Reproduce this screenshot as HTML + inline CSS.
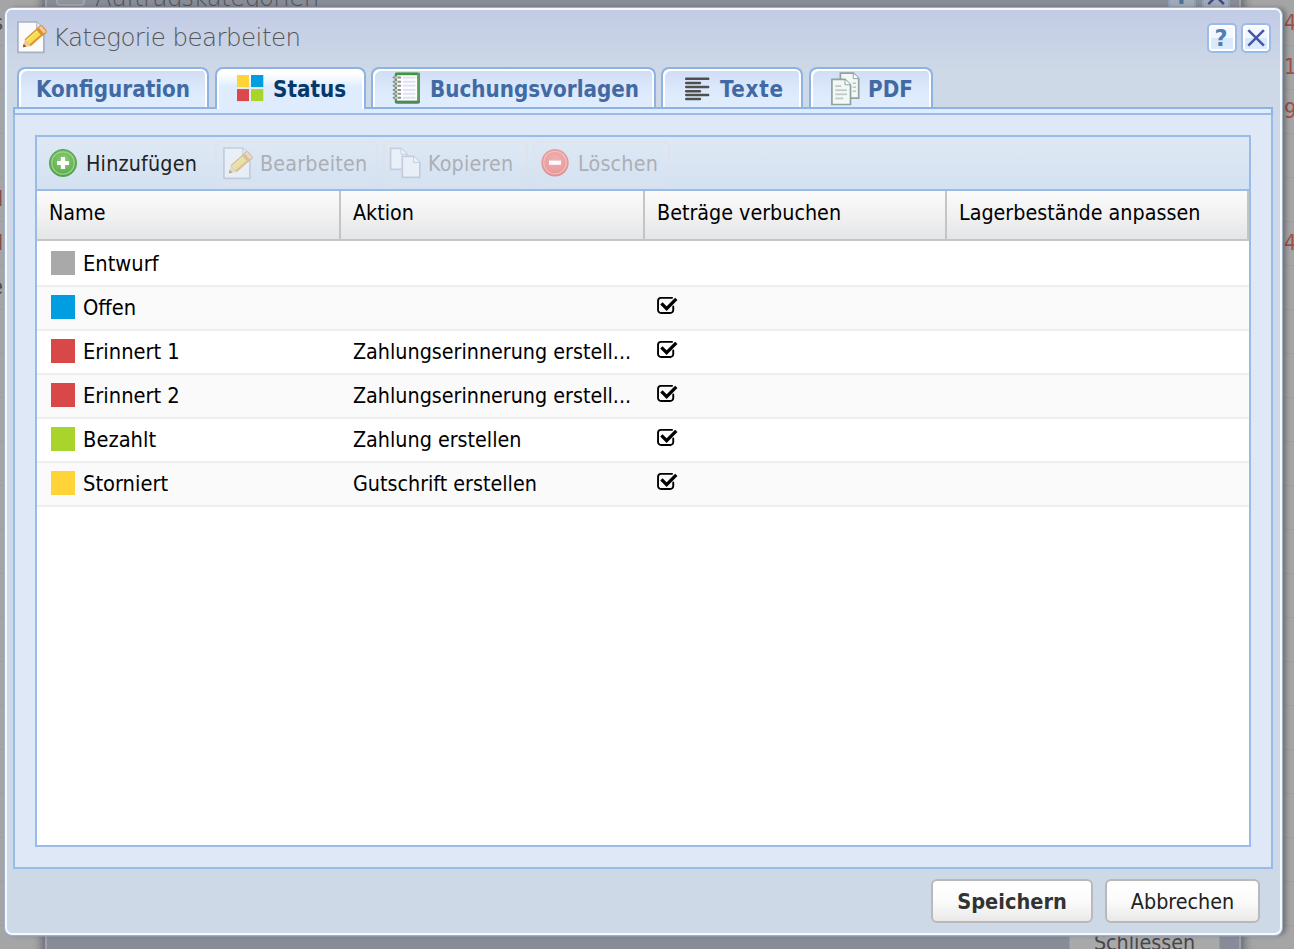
<!DOCTYPE html>
<html lang="de">
<head>
<meta charset="utf-8">
<title>Kategorie bearbeiten</title>
<style>
*{box-sizing:border-box;margin:0;padding:0}
html,body{width:1294px;height:949px;overflow:hidden}
body{position:relative;background:#a5a5a5 repeating-linear-gradient(to bottom,transparent 0,transparent 43px,rgba(0,0,0,.05) 43px,rgba(0,0,0,.05) 44px) 0 2px;font-family:"DejaVu Sans Condensed","Liberation Sans",sans-serif;font-size:21.3px;color:#000}
.abs{position:absolute}
/* ---------- masked background page ---------- */
.bgwin{position:absolute;left:43px;top:-40px;width:1200px;height:1000px;background:#888c96;border-left:2px solid #747c8b;border-right:2px solid #747c8b;box-shadow:inset 2px 0 0 #9ea3ab,inset -2px 0 0 #9ea3ab,0 0 9px 1px rgba(0,0,0,.38)}
.bgtitle{position:absolute;left:95px;top:-17px;font-family:"DejaVu Sans Light","DejaVu Sans","Liberation Sans",sans-serif;font-weight:200;font-size:24.5px;color:#4f525a;white-space:nowrap;letter-spacing:-.53px;line-height:30px}
.bgicon{position:absolute;left:56px;top:-14px;width:29px;height:20px;border:2px solid #9fa4ab;border-radius:4px;background:#8f939b}
.bgtool{position:absolute;top:-18px;width:28px;height:29px;border:2px solid #8c9fbe;background:#a0a9b8;border-radius:4px}
.bgbtn{position:absolute;left:1069px;top:925px;width:151px;height:40px;background:#a9a9a9;border:1px solid #9a9a9a;border-radius:4px 4px 0 0;font-size:21.3px;color:#46474b;text-align:center;line-height:22px;padding-top:6px}
.rednum{position:absolute;left:1284px;font-size:22px;color:#a0504a;line-height:22px}
.lfrag{position:absolute;right:1291px;font-size:21.5px;line-height:22px;color:#4a4a4a;white-space:nowrap}
/* ---------- window ---------- */
.win{position:absolute;left:4px;top:7px;width:1279px;height:929px;border:1px solid #9eafc8;border-radius:8px;background:#ced9e7;box-shadow:inset 0 0 0 2px #f6f9fe,-1px 1px 0 0 rgba(150,168,196,.55),4px 0 5px -1px rgba(0,0,0,.32)}
.winhead{position:absolute;left:2px;top:2px;right:2px;height:58px;border-radius:5px 5px 0 0;background:linear-gradient(#c2cbe5,#c7d1e6 45%,#cdd8e7)}
.title{position:absolute;left:53px;top:23px;font-family:"DejaVu Sans Light","DejaVu Sans","Liberation Sans",sans-serif;font-weight:200;font-size:24.5px;color:#555;white-space:nowrap;letter-spacing:-.53px;line-height:30px}
.tool{position:absolute;top:23px;width:30px;height:30px;border:2px solid #9dbbe8;border-radius:5px;background:linear-gradient(#f6faff 0,#f1f7ff 48%,#d9e9fc 50%,#dcebfc 100%);box-shadow:inset 0 0 0 2px #fff}
.tool .q{position:absolute;left:-1px;top:0;width:26px;text-align:center;font-family:"DejaVu Sans","Liberation Sans",sans-serif;font-weight:bold;font-size:22.5px;line-height:26px;color:#4d7fb0}
.bgtool .q{position:absolute;left:0;top:-1px;width:24px;text-align:center;font-family:"DejaVu Sans","Liberation Sans",sans-serif;font-weight:bold;font-size:22.5px;line-height:26px;color:#4c6f96}
/* tabs */
.tab{position:absolute;top:67px;height:42px;border:2px solid #8db2e3;border-bottom:0;border-radius:8px 8px 0 0;background:linear-gradient(#cfdcf5 0,#dbe7fa 45%,#deecfd 70%);box-shadow:inset 2px 2px 0 #fff,inset -2px 0 0 #fff;font-weight:bold;font-size:22.2px;color:#416aa3;white-space:nowrap}
.tab span{position:absolute;top:6px;line-height:28px}
.tab.active{height:42px;background:linear-gradient(#fff 0,#fff 12%,#deecfd 45%);color:#04396a;z-index:3}
.strip{position:absolute;left:13px;top:107px;width:1260px;height:8px;border:2px solid #8db2e3;border-bottom-color:#99bbe8;background:#deecfd;z-index:2}
.tabpanel{position:absolute;left:13px;top:113px;width:1260px;height:756px;border:2px solid #99bbe8;background:#dfe8f6}
/* grid */
.grid{position:absolute;left:35px;top:135px;width:1216px;height:712px;border:2px solid #99bbe8;background:#fff;overflow:hidden}
.tbar{position:absolute;left:0;top:0;width:100%;height:54px;border-bottom:2px solid #99bbe8;background:linear-gradient(#dfe9f5,#d3e1f1)}
.tbtn{position:absolute;top:4px;height:44px;border:2px solid transparent;border-radius:6px;white-space:nowrap;color:#222;line-height:26px}
.tbtn span{position:absolute;top:8px;letter-spacing:.2px}
.tbtn.dis{border-color:rgba(222,225,231,.8);color:#acafb6}
.hd{position:absolute;left:0;top:54px;width:100%;height:50px;border-bottom:2px solid #c5c5c5;background:linear-gradient(#fbfbfb,#f1f1f2 50%,#e4e5e7)}
.hc{position:absolute;top:0;height:48px;border-right:2px solid #c5c5c5;padding:9px 0 0 12px;line-height:26px;white-space:nowrap}
.row{position:absolute;left:0;width:100%;height:44px;border-bottom:2px solid #ededed;background:#fff}
.row.alt{background:#fafafa}
.row .sq{position:absolute;left:14px;top:8px;width:24px;height:24px}
.row .c{position:absolute;top:8px;line-height:26px;white-space:nowrap}
.row svg{position:absolute;left:619px;top:8px}
/* buttons */
.btn{position:absolute;top:879px;height:44px;border:2px solid #b9b9b9;border-radius:6px;background:linear-gradient(#fff,#fbfbfb 50%,#e9e9e9);text-align:center;line-height:26px;padding-top:8px;color:#222;white-space:nowrap}
</style>
</head>
<body>
<svg width="0" height="0" style="position:absolute">
<defs>
<filter id="bl" x="-10%" y="-10%" width="120%" height="120%"><feGaussianBlur stdDeviation="0.7"/></filter>
<filter id="bl2" x="-10%" y="-10%" width="120%" height="120%"><feGaussianBlur stdDeviation="0.35"/></filter>
<linearGradient id="gpen" x1="0" y1="0" x2="0" y2="1"><stop offset="0" stop-color="#e0a23a"/><stop offset=".3" stop-color="#f7e25a"/><stop offset=".65" stop-color="#f3d347"/><stop offset="1" stop-color="#d68f2c"/></linearGradient>
<radialGradient id="gadd" cx=".5" cy=".4" r=".6"><stop offset="0" stop-color="#8fd07c"/><stop offset=".7" stop-color="#67b257"/><stop offset="1" stop-color="#4f9a43"/></radialGradient>
<radialGradient id="gdel" cx=".5" cy=".4" r=".6"><stop offset="0" stop-color="#f2b1b0"/><stop offset=".7" stop-color="#e99b9b"/><stop offset="1" stop-color="#e08a8a"/></radialGradient>
</defs>
</svg>
<!-- masked background -->
<div class="bgwin">
  <div class="bgicon" style="left:11px;top:26px"></div>
</div>
<div class="bgtitle">Auftragskategorien</div>
<div class="bgtool" style="left:1168px"><span class="q">?</span></div>
<div class="bgtool" style="left:1202px"><svg width="24" height="25" style="position:absolute;left:0;top:0"><path d="M4.3 4.7L19.9 20.2M19.9 4.7L4.3 20.2" stroke="#3d4a85" stroke-width="2.5" fill="none"/></svg></div>
<div class="bgbtn">Schliessen</div>

<div class="lfrag" style="top:12px">s</div>
<div class="lfrag" style="top:188px;color:#8a4a40">l</div>
<div class="lfrag" style="top:232px;color:#8a4a40">l</div>
<div class="lfrag" style="top:276px">e</div>
<div class="rednum" style="top:12px">4</div>
<div class="rednum" style="top:56px">1</div>
<div class="rednum" style="top:100px">9</div>
<div class="rednum" style="top:232px">4</div>

<!-- window -->
<div class="win">
  <div class="winhead"></div>
</div>
<svg class="abs" style="left:14px;top:18px" width="36" height="38"><g filter="url(#bl)">
  <path d="M3.9 4H22.8L29.9 11.2V34.3H3.9Z" fill="#fbfbfc" stroke="#a6b1c4" stroke-width="1.7" stroke-linejoin="round"/>
  <path d="M22.8 4V11.2H29.9" fill="#eef1f6" stroke="#a6b1c4" stroke-width="1.1"/>
  <g transform="translate(8.6,28.9) rotate(-41.3)">
   <path d="M0 0.3L7 -4.2V4.8Z" fill="#f2c79d"/>
   <path d="M0 0.3L3 -1.7V2.3Z" fill="#7d5c16"/>
   <rect x="6.6" y="-4.5" width="16" height="9.3" fill="#dc9734"/>
   <rect x="6.6" y="-2.9" width="16" height="5.6" fill="#f6de4f"/>
   <rect x="6.6" y="-3" width="16" height="1.4" fill="#f4e88e" opacity=".8"/>
   <rect x="21.6" y="-4.6" width="3" height="9.5" fill="#d9922f"/>
   <rect x="24.2" y="-4.4" width="4.2" height="9.1" rx="1.8" fill="#f3caa5" stroke="#d9922f" stroke-width="1.1"/>
  </g>
 </g></svg>
<div class="title">Kategorie bearbeiten</div>
<div class="tool" style="left:1207px"><span class="q">?</span></div>
<div class="tool" style="left:1241px"><svg width="26" height="26" style="position:absolute;left:0;top:0"><path d="M5.3 5.2L20.9 20.7M20.9 5.2L5.3 20.7" stroke="#4558a4" stroke-width="2.5" fill="none" filter="url(#bl2)"/></svg></div>

<div class="tabpanel"></div>
<div class="strip"></div>
<div class="tab" style="left:17px;width:192px"><span style="left:17px">Konfiguration</span></div>
<div class="tab active" style="left:215px;width:151px"><svg class="abs" style="left:20px;top:6px" width="28" height="28" filter="url(#bl2)"><rect x="0" y="0" width="12" height="12" fill="#ffd438"/><rect x="14" y="0" width="12.3" height="12" fill="#009ee0"/><rect x="0" y="14.1" width="12" height="12" fill="#d94848"/><rect x="14" y="14.1" width="12.3" height="12" fill="#a9d42c"/></svg><span style="left:56px">Status</span></div>
<div class="tab" style="left:371px;width:285px"><svg class="abs" style="left:19px;top:3px" width="30" height="32"><g filter="url(#bl)"><rect x="3.8" y="1.6" width="23" height="29" rx="1.5" fill="#fdfdfd" stroke="#4b9a4b" stroke-width="2.2"/><rect x="3" y="0.8" width="24.6" height="2.4" fill="#3f953f"/><rect x="25.2" y="1" width="2.6" height="30" fill="#5a9c5a"/><rect x="3" y="28.6" width="24.6" height="2.6" fill="#4f8a55"/><rect x="11" y="4.6" width="12.4" height="2" fill="#dde1f4"/><rect x="0.6" y="4.6" width="8.6" height="2" rx="1" fill="#8c8c8c"/><rect x="3" y="4.6" width="3" height="2" fill="#c9c9c9"/><rect x="11" y="8.8" width="12.4" height="2" fill="#dde1f4"/><rect x="0.6" y="8.8" width="8.6" height="2" rx="1" fill="#8c8c8c"/><rect x="3" y="8.8" width="3" height="2" fill="#c9c9c9"/><rect x="11" y="12.7" width="12.4" height="2" fill="#dde1f4"/><rect x="0.6" y="12.7" width="8.6" height="2" rx="1" fill="#8c8c8c"/><rect x="3" y="12.7" width="3" height="2" fill="#c9c9c9"/><rect x="11" y="16.9" width="12.4" height="2" fill="#dde1f4"/><rect x="0.6" y="16.9" width="8.6" height="2" rx="1" fill="#8c8c8c"/><rect x="3" y="16.9" width="3" height="2" fill="#c9c9c9"/><rect x="11" y="20.8" width="12.4" height="2" fill="#dde1f4"/><rect x="0.6" y="20.8" width="8.6" height="2" rx="1" fill="#8c8c8c"/><rect x="3" y="20.8" width="3" height="2" fill="#c9c9c9"/><rect x="11" y="24.8" width="12.4" height="2" fill="#dde1f4"/><rect x="0.6" y="24.8" width="8.6" height="2" rx="1" fill="#8c8c8c"/><rect x="3" y="24.8" width="3" height="2" fill="#c9c9c9"/></g></svg><span style="left:57px">Buchungsvorlagen</span></div>
<div class="tab" style="left:661px;width:142px"><svg class="abs" style="left:22px;top:8px" width="28" height="26"><g filter="url(#bl2)" fill="#505050"><rect x="0" y="0.6" width="24.4" height="2.5" rx="1.2"/><rect x="0" y="4.8" width="16.2" height="2.5" rx="1.2"/><rect x="0" y="8.7" width="24.4" height="2.5" rx="1.2"/><rect x="0" y="12.9" width="16.2" height="2.5" rx="1.2"/><rect x="0" y="16.8" width="24.4" height="2.5" rx="1.2"/><rect x="0" y="20.8" width="16.2" height="2.5" rx="1.2"/></g></svg><span style="left:57px;letter-spacing:.7px">Texte</span></div>
<div class="tab" style="left:809px;width:124px"><svg class="abs" style="left:18px;top:1px" width="32" height="36"><g filter="url(#bl)">
<path d="M11.4 3.2H24.3L29.7 8.6V28.2H11.4Z" fill="#f3f8f6" stroke="#8fa3a0" stroke-width="1.7"/>
<path d="M24.3 3.2V8.6H29.7" fill="#fff" stroke="#8fa3a0" stroke-width="1"/>
<path d="M2.9 9.4H16L21.5 14.8V34.5H2.9Z" fill="#f3f8f6" stroke="#8fa3a0" stroke-width="1.7"/>
<path d="M16 9.4V14.8H21.5" fill="#fff" stroke="#8fa3a0" stroke-width="1"/>
<g fill="#bfcbc9"><rect x="6.3" y="15.2" width="6" height="1.8"/><rect x="6.3" y="19.3" width="11.6" height="1.8"/><rect x="6.3" y="23.4" width="11.6" height="1.8"/><rect x="6.3" y="27.5" width="8" height="1.8"/><rect x="23.6" y="12.4" width="3.4" height="1.6"/><rect x="23.6" y="16.4" width="3.4" height="1.6"/><rect x="23.6" y="20.4" width="3.4" height="1.6"/></g>
</g></svg><span style="left:57px">PDF</span></div>

<div class="grid">
  <div class="tbar">
    <div class="tbtn" style="left:4px;width:170px"><svg class="abs" style="left:4px;top:4px" width="32" height="32"><g filter="url(#bl)"><circle cx="16" cy="16" r="13.6" fill="url(#gadd)" stroke="#5aa64b" stroke-width="1"/><circle cx="16" cy="16" r="11.2" fill="none" stroke="#a5dc97" stroke-width="1.3" opacity=".8"/><path d="M16 10V22M10 16H22" stroke="#fff" stroke-width="4.2"/></g></svg><span style="left:43px">Hinzufügen</span></div>
    <div class="tbtn dis" style="left:178px;width:163px"><svg class="abs" style="left:3px;top:1px;opacity:.46" width="36" height="38"><g filter="url(#bl)">
  <path d="M3.9 4H22.8L29.9 11.2V34.3H3.9Z" fill="#fbfbfc" stroke="#a6b1c4" stroke-width="1.7" stroke-linejoin="round"/>
  <path d="M22.8 4V11.2H29.9" fill="#eef1f6" stroke="#a6b1c4" stroke-width="1.1"/>
  <g transform="translate(8.6,28.9) rotate(-41.3)">
   <path d="M0 0.3L7 -4.2V4.8Z" fill="#f2c79d"/>
   <path d="M0 0.3L3 -1.7V2.3Z" fill="#7d5c16"/>
   <rect x="6.6" y="-4.5" width="16" height="9.3" fill="#dc9734"/>
   <rect x="6.6" y="-2.9" width="16" height="5.6" fill="#f6de4f"/>
   <rect x="6.6" y="-3" width="16" height="1.4" fill="#f4e88e" opacity=".8"/>
   <rect x="21.6" y="-4.6" width="3" height="9.5" fill="#d9922f"/>
   <rect x="24.2" y="-4.4" width="4.2" height="9.1" rx="1.8" fill="#f3caa5" stroke="#d9922f" stroke-width="1.1"/>
  </g>
 </g></svg><span style="left:43px">Bearbeiten</span></div>
    <div class="tbtn dis" style="left:346px;width:145px"><svg class="abs" style="left:3px;top:2px;opacity:.55" width="36" height="38"><g filter="url(#bl)">
<path d="M2.6 3.4H13L18.8 9.2V24.4H2.6Z" fill="#f7f9fc" stroke="#b3bccb" stroke-width="1.7"/>
<path d="M13 3.4V9.2H18.8" fill="#fff" stroke="#b3bccb" stroke-width="1"/>
<path d="M14.3 11.4H25.6L31.8 17.4V32.4H14.3Z" fill="#f7f9fc" stroke="#b3bccb" stroke-width="1.7"/>
<path d="M25.6 11.4V17.4H31.8" fill="#fff" stroke="#b3bccb" stroke-width="1"/>
</g></svg><span style="left:43px">Kopieren</span></div>
    <div class="tbtn dis" style="left:496px;width:137px"><svg class="abs" style="left:4px;top:4px;opacity:.95" width="32" height="32"><g filter="url(#bl)"><circle cx="16" cy="15.7" r="13.7" fill="url(#gdel)"/><circle cx="16" cy="15.7" r="11.2" fill="none" stroke="#f6c6c5" stroke-width="1.2" opacity=".8"/><path d="M10 15.7H22" stroke="#fff" stroke-width="4.2"/></g></svg><span style="left:43px">Löschen</span></div>
  </div>
  <div class="hd">
    <div class="hc" style="left:0;width:304px">Name</div>
    <div class="hc" style="left:304px;width:304px">Aktion</div>
    <div class="hc" style="left:608px;width:302px">Beträge verbuchen</div>
    <div class="hc" style="left:910px;width:302px">Lagerbestände anpassen</div>
  </div>
  <div class="row" style="top:106px"><div class="sq" style="background:#a9a9a9"></div><div class="c" style="left:46px;font-size:21.7px">Entwurf</div></div>
  <div class="row alt" style="top:150px"><div class="sq" style="background:#009ee0"></div><div class="c" style="left:46px;font-size:21.7px">Offen</div><svg width="24" height="22" viewBox="0 0 24 22"><path d="M16.1 2.85H5A2.95 2.95 0 0 0 2.05 5.8V15A2.95 2.95 0 0 0 5 17.95H14.3A2.95 2.95 0 0 0 17.25 15V11.4" fill="none" stroke="#000" stroke-width="1.9" stroke-linecap="round"/>
 <path d="M5.4 8.3L10.6 13.55L20.3 3.85" fill="none" stroke="#000" stroke-width="3.3" stroke-linecap="butt" stroke-linejoin="miter"/></svg></div>
  <div class="row" style="top:194px"><div class="sq" style="background:#d94848"></div><div class="c" style="left:46px;font-size:21.7px">Erinnert 1</div><div class="c" style="left:316px">Zahlungserinnerung erstell...</div><svg width="24" height="22" viewBox="0 0 24 22"><path d="M16.1 2.85H5A2.95 2.95 0 0 0 2.05 5.8V15A2.95 2.95 0 0 0 5 17.95H14.3A2.95 2.95 0 0 0 17.25 15V11.4" fill="none" stroke="#000" stroke-width="1.9" stroke-linecap="round"/>
 <path d="M5.4 8.3L10.6 13.55L20.3 3.85" fill="none" stroke="#000" stroke-width="3.3" stroke-linecap="butt" stroke-linejoin="miter"/></svg></div>
  <div class="row alt" style="top:238px"><div class="sq" style="background:#d94848"></div><div class="c" style="left:46px;font-size:21.7px">Erinnert 2</div><div class="c" style="left:316px">Zahlungserinnerung erstell...</div><svg width="24" height="22" viewBox="0 0 24 22"><path d="M16.1 2.85H5A2.95 2.95 0 0 0 2.05 5.8V15A2.95 2.95 0 0 0 5 17.95H14.3A2.95 2.95 0 0 0 17.25 15V11.4" fill="none" stroke="#000" stroke-width="1.9" stroke-linecap="round"/>
 <path d="M5.4 8.3L10.6 13.55L20.3 3.85" fill="none" stroke="#000" stroke-width="3.3" stroke-linecap="butt" stroke-linejoin="miter"/></svg></div>
  <div class="row" style="top:282px"><div class="sq" style="background:#a9d42c"></div><div class="c" style="left:46px;font-size:21.7px">Bezahlt</div><div class="c" style="left:316px">Zahlung erstellen</div><svg width="24" height="22" viewBox="0 0 24 22"><path d="M16.1 2.85H5A2.95 2.95 0 0 0 2.05 5.8V15A2.95 2.95 0 0 0 5 17.95H14.3A2.95 2.95 0 0 0 17.25 15V11.4" fill="none" stroke="#000" stroke-width="1.9" stroke-linecap="round"/>
 <path d="M5.4 8.3L10.6 13.55L20.3 3.85" fill="none" stroke="#000" stroke-width="3.3" stroke-linecap="butt" stroke-linejoin="miter"/></svg></div>
  <div class="row alt" style="top:326px"><div class="sq" style="background:#ffd438"></div><div class="c" style="left:46px;font-size:21.7px">Storniert</div><div class="c" style="left:316px">Gutschrift erstellen</div><svg width="24" height="22" viewBox="0 0 24 22"><path d="M16.1 2.85H5A2.95 2.95 0 0 0 2.05 5.8V15A2.95 2.95 0 0 0 5 17.95H14.3A2.95 2.95 0 0 0 17.25 15V11.4" fill="none" stroke="#000" stroke-width="1.9" stroke-linecap="round"/>
 <path d="M5.4 8.3L10.6 13.55L20.3 3.85" fill="none" stroke="#000" stroke-width="3.3" stroke-linecap="butt" stroke-linejoin="miter"/></svg></div>
</div>

<div class="btn" style="left:931px;width:162px;font-weight:bold;font-size:21.6px;color:#333">Speichern</div>
<div class="btn" style="left:1105px;width:155px">Abbrechen</div>
</body>
</html>
